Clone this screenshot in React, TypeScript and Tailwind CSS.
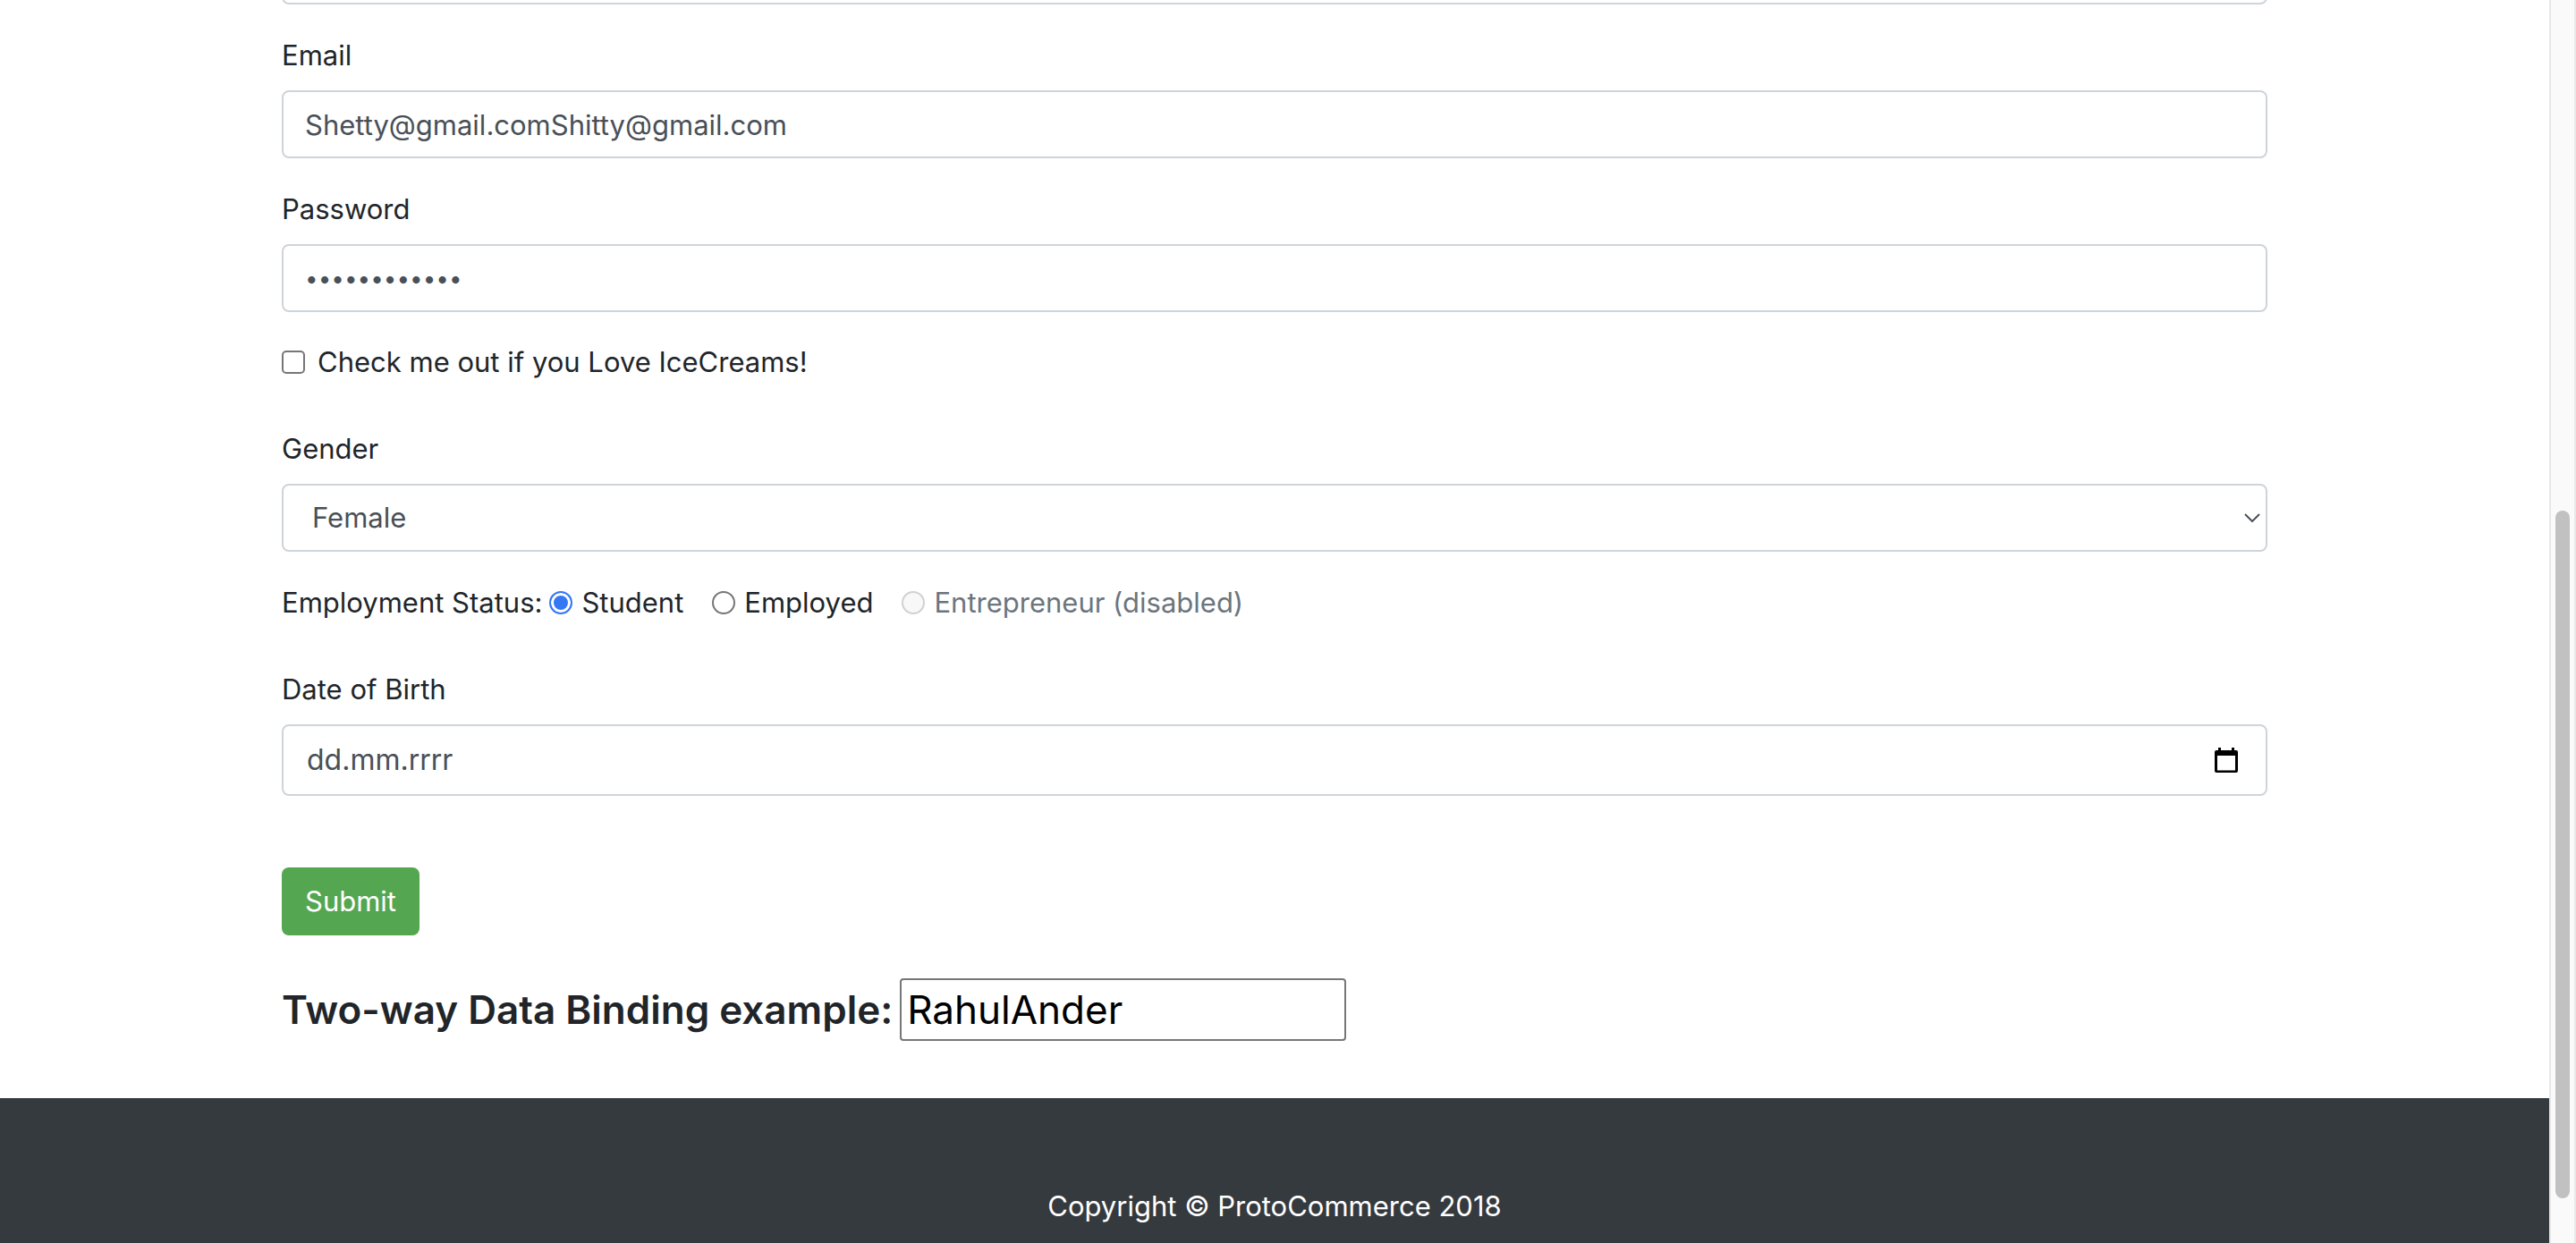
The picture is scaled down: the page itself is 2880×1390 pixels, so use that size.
import { useState } from "react";

const control =
  "block h-[76px] w-full rounded-lg border-2 border-[#ced4da] bg-white px-6 text-[31px] text-[#495057] outline-none";
const caption = "mb-[14px] block";
const radio =
  "size-[26px] shrink-0 appearance-none rounded-full border-2 border-[#767676] bg-white checked:border-[#3478f6] checked:bg-[#3478f6] checked:shadow-[inset_0_0_0_3px_white] disabled:border-[#d1d1d1] disabled:bg-[#f8f8f8]";

const statuses = [
  { id: "student", label: "Student", disabled: false },
  { id: "employed", label: "Employed", disabled: false },
  { id: "entrepreneur", label: "Entrepreneur (disabled)", disabled: true },
];

function CalendarIcon() {
  return (
    <svg viewBox="0 0 26 28" className="h-7 w-[26px]" aria-hidden="true">
      <path
        fill="#000"
        fillRule="evenodd"
        d="M4 0h3v3h12V0h3v3h2a2 2 0 0 1 2 2v21a2 2 0 0 1-2 2H2a2 2 0 0 1-2-2V5a2 2 0 0 1 2-2h2zM3 9v16.500h20V9z"
      />
    </svg>
  );
}

function ScrollTrack() {
  return (
    <div className="flex w-[30px] shrink-0 flex-col items-center border-x-2 border-[#e8e8e8] bg-[#fafafa] pt-[571px]">
      <div className="h-[769px] w-4 rounded-full bg-[#c1c1c1]" />
    </div>
  );
}

export default function App() {
  const [name, setName] = useState("RahulAnder");
  const [status, setStatus] = useState("student");

  return (
    <div className="flex min-h-screen bg-white font-['Inter',sans-serif] text-[31px] leading-[50px] text-[#212529]">
      <div className="flex min-w-0 flex-1 flex-col">
        <main className="mx-auto w-full max-w-[2280px] px-[30px]">
          <form onSubmit={(e) => e.preventDefault()}>
            <div className="mb-8 flex h-[5px] items-end overflow-hidden">
              <input aria-label="Name" className={control + " shrink-0"} />
            </div>

            <div className="mb-8">
              <label htmlFor="email" className={caption}>Email</label>
              <input id="email" type="text" className={control} defaultValue="Shetty@gmail.comShitty@gmail.com" />
            </div>

            <div className="mb-8">
              <label htmlFor="password" className={caption}>Password</label>
              <input
                id="password"
                type="password"
                className="block h-[76px] w-full rounded-lg border-2 border-[#ced4da] bg-white px-6 text-[26px] text-[#495057] outline-none"
                defaultValue="abcdefghijkl"
              />
            </div>

            <div className="mb-12 flex h-12 items-center gap-[14px]">
              <input
                id="icecream"
                type="checkbox"
                className="size-[26px] appearance-none rounded-[5px] border-2 border-[#767676] bg-white checked:bg-[#3478f6]"
              />
              <label htmlFor="icecream">Check me out if you Love IceCreams!</label>
            </div>

            <div className="mb-8">
              <label htmlFor="gender" className={caption}>Gender</label>
              <div className="relative">
                <select
                  id="gender"
                  defaultValue="Female"
                  className="block h-[76px] w-full appearance-none rounded-lg border-2 border-[#ced4da] bg-white px-8 text-[31px] text-[#495057] outline-none"
                >
                  <option>Male</option>
                  <option>Female</option>
                </select>
                <svg
                  viewBox="0 0 18 10"
                  className="pointer-events-none absolute top-[33px] right-2 h-[10px] w-[18px]"
                  fill="none"
                  stroke="#495057"
                  strokeWidth="2"
                  aria-hidden="true"
                >
                  <path d="M1 1l8 8 8-8" />
                </svg>
              </div>
            </div>

            <fieldset className="mb-12 flex h-[49px] items-center">
              <span className="mr-2">Employment Status:</span>
              {statuses.map((s) => (
                <span key={s.id} className="mr-8 flex items-center gap-[10px]">
                  <input
                    id={s.id}
                    type="radio"
                    name="status"
                    className={radio}
                    disabled={s.disabled}
                    checked={status === s.id}
                    onChange={() => setStatus(s.id)}
                  />
                  <label htmlFor={s.id} className={s.disabled ? "text-[#6c757d]" : ""}>{s.label}</label>
                </span>
              ))}
            </fieldset>

            <div className="mb-20">
              <label htmlFor="dob" className={caption}>Date of Birth</label>
              <div className="flex h-20 items-center rounded-lg border-2 border-[#ced4da] bg-white pr-[31px] pl-[26px]">
                <input
                  id="dob"
                  type="text"
                  placeholder="dd.mm.rrrr"
                  className="min-w-0 flex-1 bg-transparent text-[32px] text-[#495057] outline-none placeholder:text-[#495057] placeholder:opacity-100"
                />
                <button type="button" aria-label="Open calendar"><CalendarIcon /></button>
              </div>
            </div>

            <button type="submit" className="block h-[76px] rounded-lg bg-[#54a651] px-[26px] text-white">
              Submit
            </button>
          </form>

          <div className="mt-12 mb-16 flex h-[70px] items-center gap-2 text-[44px]">
            <label htmlFor="binding" className="font-semibold">Two-way Data Binding example:</label>
            <input
              id="binding"
              value={name}
              onChange={(e) => setName(e.target.value)}
              className="h-[70px] w-[499px] rounded-[4px] border-2 border-[#767676] bg-white px-[6px] text-black outline-none"
            />
          </div>
        </main>

        <footer className="flex-1 bg-[#353a3e] pt-24 text-center text-white">
          <p>Copyright © ProtoCommerce 2018</p>
        </footer>
      </div>
      <ScrollTrack />
    </div>
  );
}
